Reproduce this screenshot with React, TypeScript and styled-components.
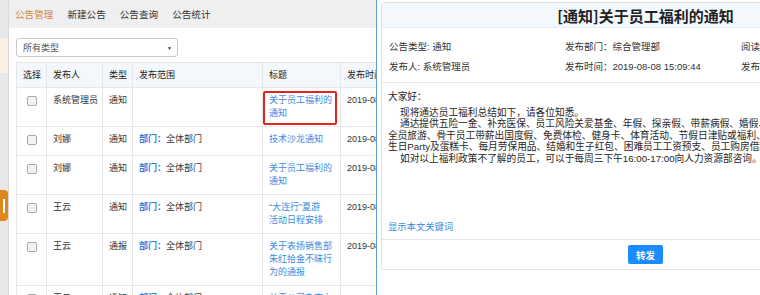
import styled, { createGlobalStyle } from "styled-components";

const GlobalStyle = createGlobalStyle`
  html, body {
    margin: 0;
    padding: 0;
    background: #fff;
  }
  body {
    font-family: "Liberation Sans", "Noto Sans CJK SC", sans-serif;
    color: #333;
  }
`;

const Page = styled.div`
  display: flex;
  width: 760px;
  height: 295px;
  overflow: hidden;
  background: #fff;
`;

const Sidebar = styled.div`
  flex: none;
  width: 8px;
  display: flex;
  flex-direction: column;
  background: #e8e8e8;
  border-right: 1px solid #dadada;
`;

const Peach = styled.div`
  margin-top: 38px;
  height: 35px;
  background: #fbefe4;
`;

const Handle = styled.div`
  margin-top: 117px;
  height: 31px;
  display: flex;
  align-items: center;
  justify-content: center;
  background: #df861d;
  border-radius: 0 4px 4px 0;

  &::before {
    content: "";
    width: 2px;
    height: 14px;
    background: #fff;
  }
`;

const Main = styled.div`
  flex: none;
  width: 367px;
  display: flex;
  flex-direction: column;
  overflow: hidden;
`;

const Nav = styled.div`
  flex: none;
  height: 28px;
  display: flex;
  align-items: center;
  gap: 14px;
  padding-left: 6px;
  background: #efefef;
`;

const NavItem = styled.span<{ $active?: boolean }>`
  font-size: 9.6px;
  color: ${(p) => (p.$active ? "#d4873b" : "#333")};
  white-space: nowrap;
`;

const Content = styled.div`
  flex: none;
  padding: 10px 0 0 7px;
`;

const Select = styled.div`
  width: 149px;
  height: 17px;
  display: flex;
  align-items: center;
  justify-content: space-between;
  padding: 0 5px 0 6px;
  border: 1px solid #cacaca;
  border-radius: 3px;
  font-size: 9px;
  color: #555;
  box-sizing: content-box;

  &::after {
    content: "▼";
    font-size: 5px;
    color: #333;
  }
`;

const Table = styled.table`
  margin-top: 5px;
  border-collapse: collapse;
  table-layout: fixed;
  width: 424px;
  font-size: 9px;
  line-height: 13px;
`;

const Col = styled.col<{ $w: number }>`
  width: ${(p) => p.$w}px;
`;

const Th = styled.th`
  height: 24px;
  padding: 0 6px;
  text-align: left;
  font-weight: normal;
  color: #222;
  background: #f4f8fc;
  border: 1px solid #e4e7ea;
  white-space: nowrap;
  overflow: hidden;
`;

const Td = styled.td<{ $center?: boolean }>`
  padding: 6px 6px 6px 6px;
  vertical-align: top;
  border: 1px solid #e6e6e6;
  text-align: ${(p) => (p.$center ? "center" : "left")};
  white-space: nowrap;
  overflow: hidden;
`;

const Check = styled.span`
  display: inline-block;
  width: 8px;
  height: 8px;
  margin-top: 2px;
  border: 1px solid #a8a8a8;
  border-radius: 2px;
  background: #f2f2f2;
`;

const Link = styled.span`
  color: #3a8ce4;
`;

const Dept = styled.b`
  color: #2f7fe0;
`;

const Marked = styled.span`
  position: relative;
  display: inline-block;

  &::after {
    content: "";
    position: absolute;
    left: -6px;
    top: -3px;
    right: -5px;
    bottom: -5px;
    border: 2px solid #e32222;
    border-radius: 2px;
  }
`;

const Divider = styled.div`
  flex: none;
  width: 1px;
  background: #5e9ddb;
`;

const Drawer = styled.div`
  flex: 1;
  min-width: 0;
  padding: 2px 0 0 4px;
  overflow: hidden;
`;

const Panel = styled.div`
  width: 527px;
  border: 1px solid #e2e2e2;
  border-radius: 3px;
  background: #fff;
`;

const PanelHead = styled.div`
  height: 24px;
  display: flex;
  align-items: center;
  justify-content: center;
  background: #f3f8fd;
  border-bottom: 1px solid #e6edf4;
  font-family: "Noto Sans CJK SC", sans-serif;
  font-size: 15px;
  font-weight: bold;
  color: #222;
`;

const Info = styled.div`
  display: grid;
  grid-template-columns: repeat(3, 176px);
  padding: 9px 0 5px 7px;
  border-bottom: 1px solid #e6e6e6;
  font-size: 9.5px;
  line-height: 20px;
  color: #333;
  white-space: nowrap;
`;

const Body = styled.div`
  height: 148px;
  display: flex;
  flex-direction: column;
  padding: 8px 0 0 6px;
  border-bottom: 1px solid #e6e6e6;
  font-size: 9.7px;
  line-height: 11.4px;
  color: #262626;
  white-space: nowrap;
`;

const Greeting = styled.div`
  margin-bottom: 4.5px;
`;

const Line = styled.div<{ $indent?: boolean }>`
  padding-left: ${(p) => (p.$indent ? "12px" : "0")};
`;

const Keywords = styled.span`
  margin-top: auto;
  margin-bottom: 6px;
  font-size: 9.3px;
  color: #3a8ce4;
`;

const Footer = styled.div`
  display: flex;
  justify-content: center;
  padding: 5px 0 5px;
`;

const Button = styled.button`
  width: 35px;
  height: 19px;
  padding: 0;
  border: none;
  border-radius: 2px;
  background: #1a8cff;
  color: #fff;
  font-family: "Noto Sans CJK SC", sans-serif;
  font-size: 9.5px;
  font-weight: bold;
`;

type Row = {
  who: string;
  kind: string;
  scope?: boolean;
  title: string[];
  marked?: boolean;
};

const rows: Row[] = [
  { who: "系统管理员", kind: "通知", title: ["关于员工福利的", "通知"], marked: true },
  { who: "刘娜", kind: "通知", scope: true, title: ["技术沙龙通知"] },
  { who: "刘娜", kind: "通知", scope: true, title: ["关于员工福利的", "通知"] },
  { who: "王云", kind: "通知", scope: true, title: ["“大连行”夏游", "活动日程安排"] },
  { who: "王云", kind: "通报", scope: true, title: ["关于表扬销售部", "朱红拾金不昧行", "为的通报"] },
  { who: "王云", kind: "通知", scope: true, title: ["关于公司杂志上", "线的通知"] },
];

const TitleLines = ({ lines }: { lines: string[] }) => (
  <>
    {lines.map((l, i) => (
      <span key={i}>
        {i > 0 && <br />}
        {l}
      </span>
    ))}
  </>
);

export default function App() {
  return (
    <>
      <GlobalStyle />
      <Page>
        <Sidebar>
          <Peach />
          <Handle />
        </Sidebar>
        <Main>
          <Nav>
            <NavItem $active>公告管理</NavItem>
            <NavItem>新建公告</NavItem>
            <NavItem>公告查询</NavItem>
            <NavItem>公告统计</NavItem>
          </Nav>
          <Content>
            <Select>所有类型</Select>
            <Table>
              <colgroup>
                <Col $w={30} />
                <Col $w={56} />
                <Col $w={30} />
                <Col $w={130} />
                <Col $w={78} />
                <Col $w={100} />
              </colgroup>
              <thead>
                <tr>
                  <Th>选择</Th>
                  <Th>发布人</Th>
                  <Th>类型</Th>
                  <Th>发布范围</Th>
                  <Th>标题</Th>
                  <Th>发布时间</Th>
                </tr>
              </thead>
              <tbody>
                {rows.map((r, i) => (
                  <tr key={i}>
                    <Td $center>
                      <Check />
                    </Td>
                    <Td>{r.who}</Td>
                    <Td>{r.kind}</Td>
                    <Td>
                      {r.scope && (
                        <>
                          <Dept>部门：</Dept>全体部门
                        </>
                      )}
                    </Td>
                    <Td>
                      <Link>
                        {r.marked ? (
                          <Marked>
                            <TitleLines lines={r.title} />
                          </Marked>
                        ) : (
                          <TitleLines lines={r.title} />
                        )}
                      </Link>
                    </Td>
                    <Td>2019-08-08</Td>
                  </tr>
                ))}
              </tbody>
            </Table>
          </Content>
        </Main>
        <Divider />
        <Drawer>
          <Panel>
            <PanelHead>[通知]关于员工福利的通知</PanelHead>
            <Info>
              <span>公告类型: 通知</span>
              <span>发布部门：综合管理部</span>
              <span>阅读人数：12</span>
              <span>发布人: 系统管理员</span>
              <span>发布时间：2019-08-08 15:09:44</span>
              <span>发布范围：全体部门</span>
            </Info>
            <Body>
              <Greeting>大家好：</Greeting>
              <Line $indent>现将通达员工福利总结如下，请各位知悉。</Line>
              <Line $indent>
                通达提供五险一金、补充医保、员工风险关爱基金、年假、探亲假、带薪病假、婚假、产假、陪产假，
              </Line>
              <Line>
                全员旅游、骨干员工带薪出国度假、免费体检、健身卡、体育活动、节假日津贴或福利、
              </Line>
              <Line>
                生日Party及蛋糕卡、每月劳保用品、结婚和生子红包、困难员工工资预支、员工购房借款等。
              </Line>
              <Line $indent>
                如对以上福利政策不了解的员工，可以于每周三下午16:00-17:00向人力资源部咨询。
              </Line>
              <Keywords>显示本文关键词</Keywords>
            </Body>
            <Footer>
              <Button>转发</Button>
            </Footer>
          </Panel>
        </Drawer>
      </Page>
    </>
  );
}
